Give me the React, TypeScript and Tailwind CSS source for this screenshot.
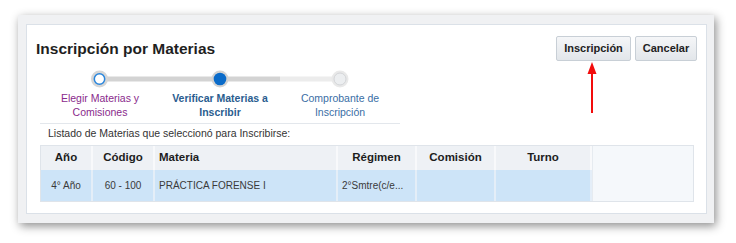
import React from "react";

const font = { fontFamily: '"Liberation Sans", Arial, sans-serif' };

function Stepper() {
  return (
    <div className="ml-[4px] w-[360px] border-b border-[#e3e7ec] pb-[4px]">
      <svg width="360" height="18" viewBox="0 0 360 18" className="mt-[9px] block">
        <rect x="59" y="6.5" width="181" height="5" fill="#d3d3d3" />
        <rect x="240" y="6.5" width="60" height="5" fill="#ececec" />
        <circle cx="59.5" cy="9" r="8.5" fill="#d6d6d6" />
        <circle cx="59.5" cy="9" r="5.2" fill="#ffffff" stroke="#2a86dc" strokeWidth="1.5" />
        <circle cx="180" cy="9" r="8.5" fill="#d2d2d2" />
        <circle cx="180" cy="9" r="6.3" fill="#0b6bc9" />
        <circle cx="300" cy="9" r="8.5" fill="#e9e9e9" />
        <circle cx="300" cy="9" r="6" fill="#eceef0" stroke="#d3d5d8" strokeWidth="1" />
      </svg>
      <div className="mt-[3px] flex text-[10.5px] leading-[14px]">
        <div className="w-[120px] text-center text-[#8a2a8c]">
          Elegir Materias y<br />Comisiones
        </div>
        <div className="w-[120px] text-center font-bold text-[#2a5d8f]">
          Verificar Materias a<br />Inscribir
        </div>
        <div className="w-[120px] text-center text-[#3a6ea5]">
          Comprobante de<br />Inscripción
        </div>
      </div>
    </div>
  );
}

function Table() {
  const head = "flex items-center bg-[#eef1f5] border-r-2 border-[#f8f9fb] text-[11.5px] font-bold text-[#1d1d1d]";
  const cell = "flex items-center bg-[#cde4f8] border-r-2 border-[#e4eef8] text-[10px] text-[#3a3a3a]";
  return (
    <div className="ml-[4px] mt-[5px] w-[654px] border border-[#dfe4ea] grid grid-cols-[52px_62px_183px_79px_79px_96px_101px] grid-rows-[24px_31px]">
      <div className={`${head} justify-center`}>Año</div>
      <div className={`${head} justify-center`}>Código</div>
      <div className={`${head} pl-[4px]`}>Materia</div>
      <div className={`${head} justify-center`}>Régimen</div>
      <div className={`${head} justify-center`}>Comisión</div>
      <div className={`${head} justify-center`}>Turno</div>
      <div className="row-span-2 bg-[#f5f8fb] border-l border-[#e6ebf0]"></div>
      <div className={`${cell} justify-center`}>4° Año</div>
      <div className={`${cell} justify-center`}>60 - 100</div>
      <div className={`${cell} pl-[4px]`}>PRÁCTICA FORENSE I</div>
      <div className={`${cell} pl-[4px]`}>2°Smtre(c/e...</div>
      <div className={cell}></div>
      <div className={cell}></div>
    </div>
  );
}

export default function App() {
  return (
    <div className="w-[736px] h-[243px] bg-white overflow-hidden relative" style={font}>
      <div className="ml-[18px] mt-[15px] w-[696px] h-[208px] bg-[#f0f1f3] pl-[8px] pr-[7px] pt-[9px] pb-[9px] shadow-[2px_3px_9px_rgba(0,0,0,0.45)]">
        <div className="h-[190px] bg-white border border-[#dbe1e8] pl-[9px] pr-[9px] pt-[11px]">
          <div className="flex items-center justify-between h-[25px]">
            <div className="text-[15.5px] font-bold text-[#1f1f1f]">Inscripción por Materias</div>
            <div className="flex gap-[4px]">
              <button className="w-[75px] h-[25px] rounded-[2px] border border-[#c8cfd6] bg-gradient-to-b from-[#f5f6f8] to-[#e2e6ea] text-[11px] font-bold text-[#222]">
                Inscripción
              </button>
              <button className="w-[62px] h-[25px] rounded-[2px] border border-[#c8cfd6] bg-gradient-to-b from-[#f5f6f8] to-[#e2e6ea] text-[11px] font-bold text-[#222]">
                Cancelar
              </button>
            </div>
          </div>
          <Stepper />
          <div className="ml-[12px] mt-[2px] text-[10.5px] leading-[14px] text-[#333]">
            Listado de Materias que seleccionó para Inscribirse:
          </div>
          <Table />
        </div>
      </div>
      <svg className="absolute left-[586px] top-[62px]" width="12" height="52" viewBox="0 0 12 52">
        <polygon points="6,0 1.5,12 10.5,12" fill="#f20c0c" />
        <rect x="5" y="11" width="2" height="40" fill="#f20c0c" />
      </svg>
    </div>
  );
}
